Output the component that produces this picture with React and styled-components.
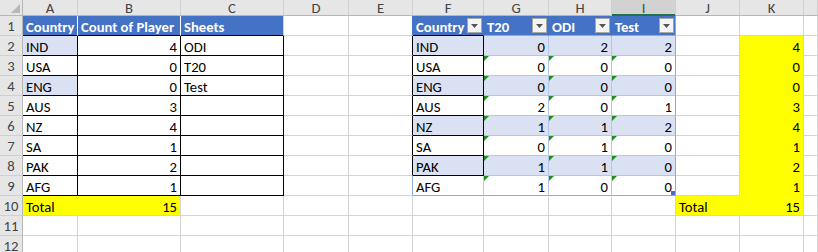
import React from "react";
import styled, { createGlobalStyle, css } from "styled-components";

const GlobalStyle = createGlobalStyle`
  html, body { margin: 0; padding: 0; background: #ffffff; overflow: hidden; }
  body { font-family: Carlito, Lato, "Liberation Sans", sans-serif; }
`;

const GRID = "#d4d4d4";
const BLACK = "#000000";
const BLUE = "#4472c4";
const BAND = "#d9e1f2";
const EDGE = "#8ea9db";
const INNER = "#b4c6e7";
const YELLOW = "#ffff00";

const COLS = ["A", "B", "C", "D", "E", "F", "G", "H", "I", "J", "K", "L"];
const WIDTHS = [23, 55, 103, 103, 65, 64, 71, 65, 63, 64, 64, 64];

const Sheet = styled.div`
  display: grid;
  grid-template-columns: ${WIDTHS.map((w) => `${w}px`).join(" ")} 1fr;
  grid-template-rows: 16px repeat(12, 20px);
  width: 818px;
  height: 252px;
  overflow: hidden;
  font-size: 11pt;
  color: #000;
`;

const Corner = styled.div`
  position: relative;
  background: #e6e6e6;
  border-right: 1px solid #b7b7b7;
  border-bottom: 1px solid #b7b7b7;
  &::after {
    content: "";
    position: absolute;
    right: 2px;
    bottom: 2px;
    border-style: solid;
    border-width: 0 0 9px 9px;
    border-color: transparent transparent #b8b8b8 transparent;
  }
`;

const ColHead = styled.div`
  display: flex;
  align-items: center;
  justify-content: center;
  box-sizing: border-box;
  background: ${(p) => (p.$active ? "#d2d2d2" : "#e6e6e6")};
  color: ${(p) => (p.$active ? "#1f5f3a" : "#444")};
  border-right: 1px solid #cfcfcf;
  border-bottom: 1px solid ${(p) => (p.$active ? "#217346" : "#b7b7b7")};
  box-shadow: ${(p) => (p.$active ? "inset 0 -1px 0 #217346" : "none")};
  font-size: 11pt;
  line-height: 14px;
`;

const RowHead = styled.div`
  display: flex;
  align-items: center;
  justify-content: center;
  background: #e6e6e6;
  color: #444;
  border-right: 1px solid #b7b7b7;
  border-bottom: 1px solid #cfcfcf;
  font-size: 11pt;
  line-height: 18px;
  padding-top: 1px;
`;

const Cell = styled.div`
  position: relative;
  display: flex;
  align-items: center;
  justify-content: ${(p) => (p.$num ? "flex-end" : "space-between")};
  padding: 2px 3px 0 3px;
  box-sizing: border-box;
  overflow: hidden;
  white-space: nowrap;
  line-height: 18px;
  background: ${(p) => p.$bg || "#ffffff"};
  color: ${(p) => (p.$head ? "#ffffff" : "#000000")};
  font-weight: ${(p) => (p.$head ? 700 : 400)};
  border-right: 1px solid ${(p) => p.$br || GRID};
  border-bottom: 1px solid ${(p) => p.$bb || GRID};
  ${(p) =>
    p.$flag &&
    css`
      &::before {
        content: "";
        position: absolute;
        left: 0;
        top: 0;
        border-style: solid;
        border-width: 5px 5px 0 0;
        border-color: #1e8c1e transparent transparent transparent;
      }
    `}
  ${(p) =>
    p.$handle &&
    css`
      &::after {
        content: "";
        position: absolute;
        right: 0;
        bottom: 0;
        width: 4px;
        height: 4px;
        background: #4a6bbf;
      }
    `}
`;

const FilterButton = styled.span`
  display: flex;
  align-items: center;
  justify-content: center;
  flex: none;
  width: 15px;
  height: 15px;
  margin-right: -2px;
  margin-top: -2px;
  box-sizing: border-box;
  background: #f4f4f4;
  border: 1px solid #a6a6a6;
`;

const Caret = () => (
  <svg width="7" height="4" viewBox="0 0 7 4">
    <path d="M0 0h7L3.5 4z" fill="#555" />
  </svg>
);

// Right-hand table values: T20, ODI, Test
const matrix = [
  ["IND", 0, 2, 2],
  ["USA", 0, 0, 0],
  ["ENG", 0, 0, 0],
  ["AUS", 2, 0, 1],
  ["NZ", 1, 1, 2],
  ["SA", 0, 1, 0],
  ["PAK", 1, 1, 0],
  ["AFG", 1, 0, 0],
];
const counts = [4, 0, 0, 3, 4, 1, 2, 1];
const sheets = ["ODI", "T20", "Test"];

function buildRow(r) {
  // one spec per column A..L
  const cells = COLS.map(() => ({}));
  const [A, B, C, , E, F, G, H, I, J, K] = cells;

  if (r === 1) {
    Object.assign(A, { text: "Country", head: true, bg: BLUE, br: "#ffffff", bb: BLACK });
    Object.assign(B, { text: "Count of Player", head: true, bg: BLUE, br: "#ffffff", bb: BLACK });
    Object.assign(C, { text: "Sheets", head: true, bg: BLUE, bb: BLACK });
    Object.assign(E, { br: BLUE });
    Object.assign(F, { text: "Country", head: true, bg: BLUE, br: BLUE, bb: BLACK, filter: true });
    Object.assign(G, { text: "T20", head: true, bg: BLUE, br: BLUE, bb: EDGE, filter: true });
    Object.assign(H, { text: "ODI", head: true, bg: BLUE, br: BLUE, bb: EDGE, filter: true });
    Object.assign(I, { text: "Test", head: true, bg: BLUE, br: EDGE, bb: EDGE, filter: true });
  } else if (r <= 9) {
    const i = r - 2;
    const [country, t20, odi, test] = matrix[i];
    const band = r % 2 === 0 ? BAND : undefined;
    Object.assign(A, {
      text: country,
      br: BLACK,
      bb: BLACK,
      bg: r === 2 || r === 4 ? BAND : undefined,
    });
    Object.assign(B, { text: counts[i], num: true, br: BLACK, bb: BLACK });
    Object.assign(C, { text: sheets[i] || "", br: BLACK, bb: BLACK });
    const last = r === 9;
    Object.assign(E, { br: last ? EDGE : BLACK });
    Object.assign(F, {
      text: country,
      bg: band,
      br: last ? INNER : BLACK,
      bb: last ? EDGE : BLACK,
    });
    const flag = r >= 3;
    Object.assign(G, { text: t20, num: true, bg: band, br: INNER, bb: last ? EDGE : INNER, flag });
    Object.assign(H, { text: odi, num: true, bg: band, br: INNER, bb: last ? EDGE : INNER, flag });
    Object.assign(I, { text: test, num: true, bg: band, br: EDGE, bb: last ? EDGE : INNER, flag, handle: last });
    Object.assign(K, { text: counts[i], num: true, bg: YELLOW, bb: YELLOW });
  } else if (r === 10) {
    Object.assign(A, { text: "Total", bg: YELLOW, br: YELLOW });
    Object.assign(B, { text: 15, num: true, bg: YELLOW });
    Object.assign(J, { text: "Total", bg: YELLOW, br: YELLOW });
    Object.assign(K, { text: 15, num: true, bg: YELLOW });
  }
  return cells;
}

export default function App() {
  const rows = Array.from({ length: 12 }, (_, k) => k + 1);
  return (
    <>
      <GlobalStyle />
      <Sheet>
        <Corner />
        {COLS.map((c) => (
          <ColHead key={c} $active={c === "I"}>
            {c === "L" ? "" : c}
          </ColHead>
        ))}
        {rows.map((r) => (
          <React.Fragment key={r}>
            <RowHead>{r}</RowHead>
            {buildRow(r).map((s, ci) => (
              <Cell
                key={ci}
                $bg={s.bg}
                $br={s.br}
                $bb={s.bb}
                $head={s.head}
                $num={s.num}
                $flag={s.flag}
                $handle={s.handle}
              >
                {s.text !== undefined ? <span>{s.text}</span> : null}
                {s.filter ? (
                  <FilterButton>
                    <Caret />
                  </FilterButton>
                ) : null}
              </Cell>
            ))}
          </React.Fragment>
        ))}
      </Sheet>
    </>
  );
}
